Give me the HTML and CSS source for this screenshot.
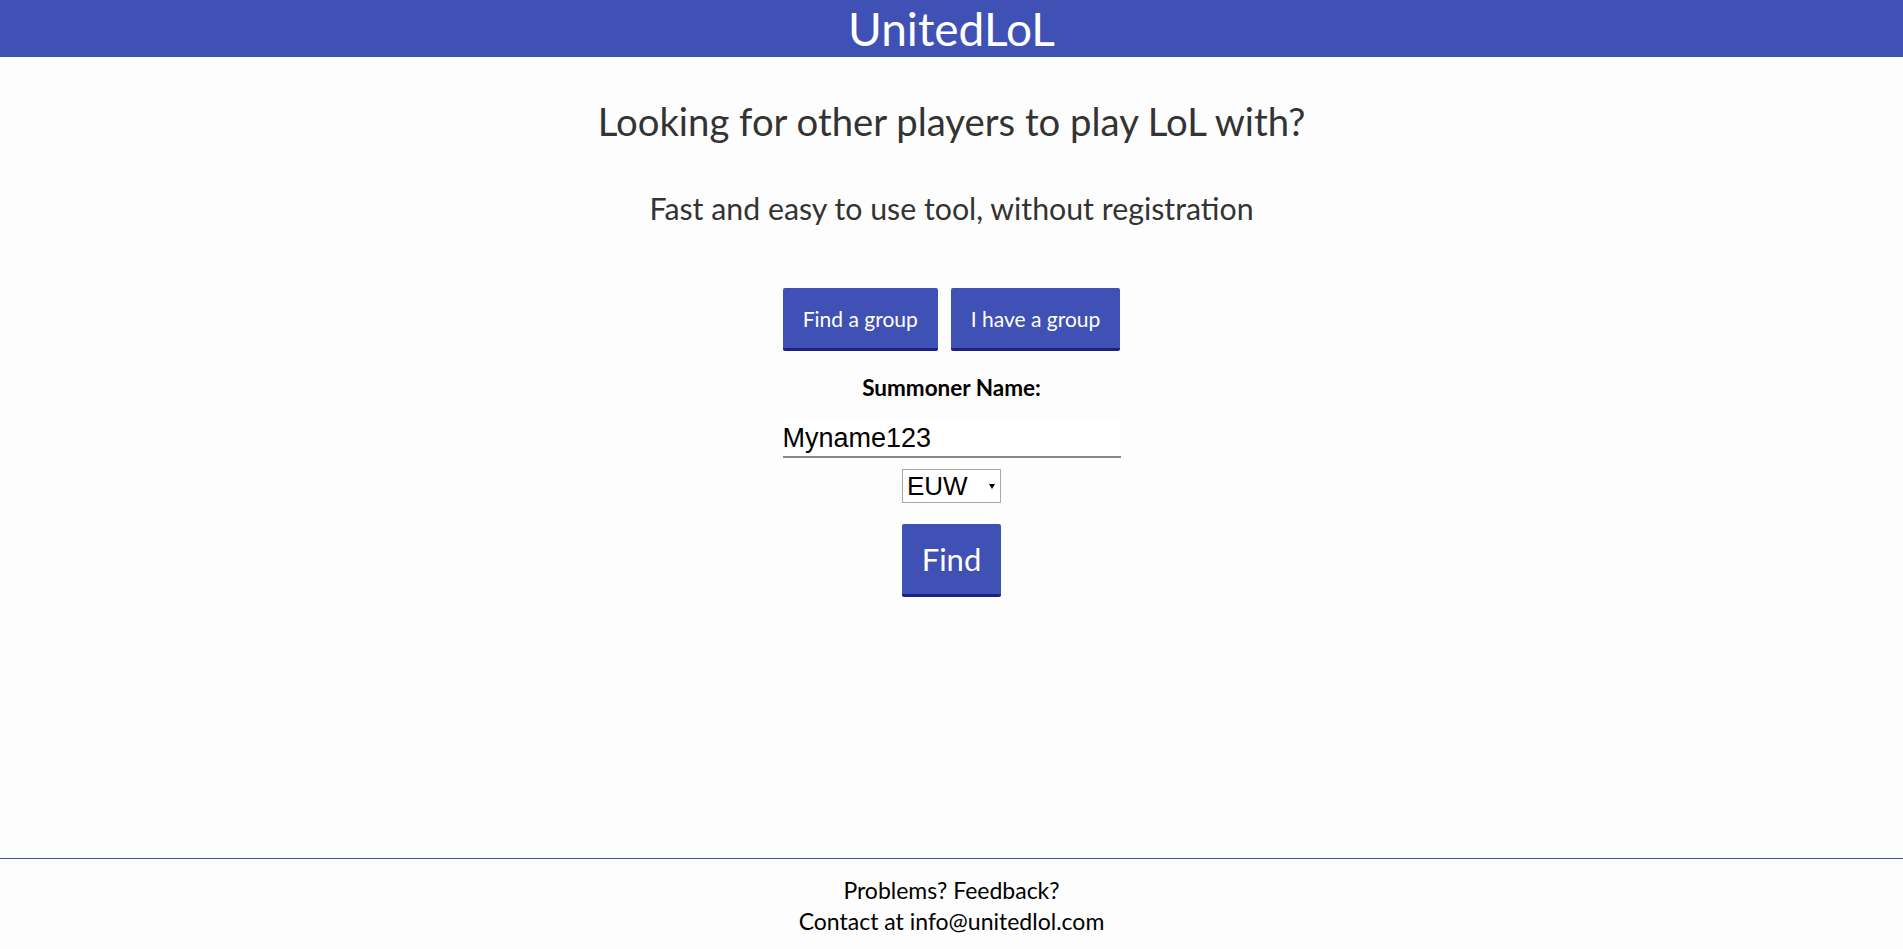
FILE: index.html
```html
<!DOCTYPE html>
<html lang="en">
<head>
<meta charset="utf-8">
<title>UnitedLoL</title>
<link rel="stylesheet" href="styles.css">
</head>
<body>
<header class="topbar">
  <div class="brand">UnitedLoL</div>
</header>
<main class="content">
  <h1 class="headline">Looking for other players to play LoL with?</h1>
  <h2 class="subline">Fast and easy to use tool, without registration</h2>
  <div class="mode-buttons">
    <button class="btn btn-mode">Find a group</button>
    <button class="btn btn-mode">I have a group</button>
  </div>
  <form class="search-form">
    <label class="field-label" for="summoner">Summoner Name:</label>
    <input class="name-input" id="summoner" type="text" value="Myname123">
    <span class="select-wrap">
      <select class="region-select">
        <option>EUW</option>
        <option>EUNE</option>
        <option>NA</option>
      </select>
    </span>
    <button class="btn btn-find" type="button">Find</button>
  </form>
</main>
<footer class="footer">
  <p class="footer-line">Problems? Feedback?</p>
  <p class="footer-line">Contact at info@unitedlol.com</p>
</footer>
</body>
</html>
```
FILE: styles.css
```css
html, body {
  margin: 0;
  padding: 0;
}
body {
  background: #fdfdfd;
  font-family: "Lato", "Open Sans", sans-serif;
  color: #000;
  min-height: 100vh;
  display: flex;
  flex-direction: column;
}
.topbar {
  background: #3f51b5;
  height: 57px;
  display: flex;
  justify-content: center;
  align-items: center;
}
.brand {
  color: #fff;
  font-size: 46px;
  line-height: 57px;
  font-weight: 400;
}
.content {
  display: flex;
  flex-direction: column;
  align-items: center;
}
.headline {
  margin: 41px 0 0;
  font-size: 38.3px;
  line-height: 46px;
  font-weight: 400;
  color: #333;
}
.subline {
  margin: 46px 0 0;
  font-size: 30.3px;
  line-height: 36px;
  font-weight: 400;
  color: #333;
}
.mode-buttons {
  margin-top: 62px;
  display: flex;
  gap: 13px;
}
.btn {
  background: #3f51b5;
  color: #fff;
  border: none;
  border-bottom: 3px solid #1a237e;
  border-radius: 2px;
  font-family: "Lato", "Open Sans", sans-serif;
  cursor: pointer;
}
.btn-mode {
  height: 63px;
  padding: 0 20px;
  font-size: 21px;
}
.search-form {
  display: flex;
  flex-direction: column;
  align-items: center;
}
.field-label {
  margin-top: 24px;
  font-size: 22.5px;
  line-height: 26px;
  font-weight: 700;
}
.name-input {
  margin-top: 20px;
  width: 338px;
  height: 37px;
  box-sizing: border-box;
  border: none;
  border-bottom: 2px solid #888;
  background: #fff;
  font-family: "Liberation Sans", Arial, sans-serif;
  font-size: 27px;
  padding: 0;
  outline: none;
}
.select-wrap {
  margin-top: 11px;
  position: relative;
  display: inline-block;
}
.select-wrap::after {
  content: "";
  position: absolute;
  right: 6px;
  top: 15px;
  border-left: 3px solid transparent;
  border-right: 3px solid transparent;
  border-top: 5px solid #000;
  pointer-events: none;
}
.region-select {
  appearance: none;
  -webkit-appearance: none;
  width: 99px;
  height: 34px;
  box-sizing: border-box;
  border: 1px solid #a9a9a9;
  border-radius: 0;
  background: #fff;
  font-family: "Liberation Sans", Arial, sans-serif;
  font-size: 26px;
  padding: 0 0 0 4px;
  color: #000;
}
.btn-find {
  margin-top: 21px;
  width: 99px;
  height: 73px;
  font-size: 31px;
}
.footer {
  margin-top: auto;
  border-top: 1px solid #3f51b5;
  height: 91px;
  padding-top: 16px;
  box-sizing: border-box;
  text-align: center;
}
.footer-line {
  margin: 0;
  font-size: 23px;
  line-height: 31px;
}
```
